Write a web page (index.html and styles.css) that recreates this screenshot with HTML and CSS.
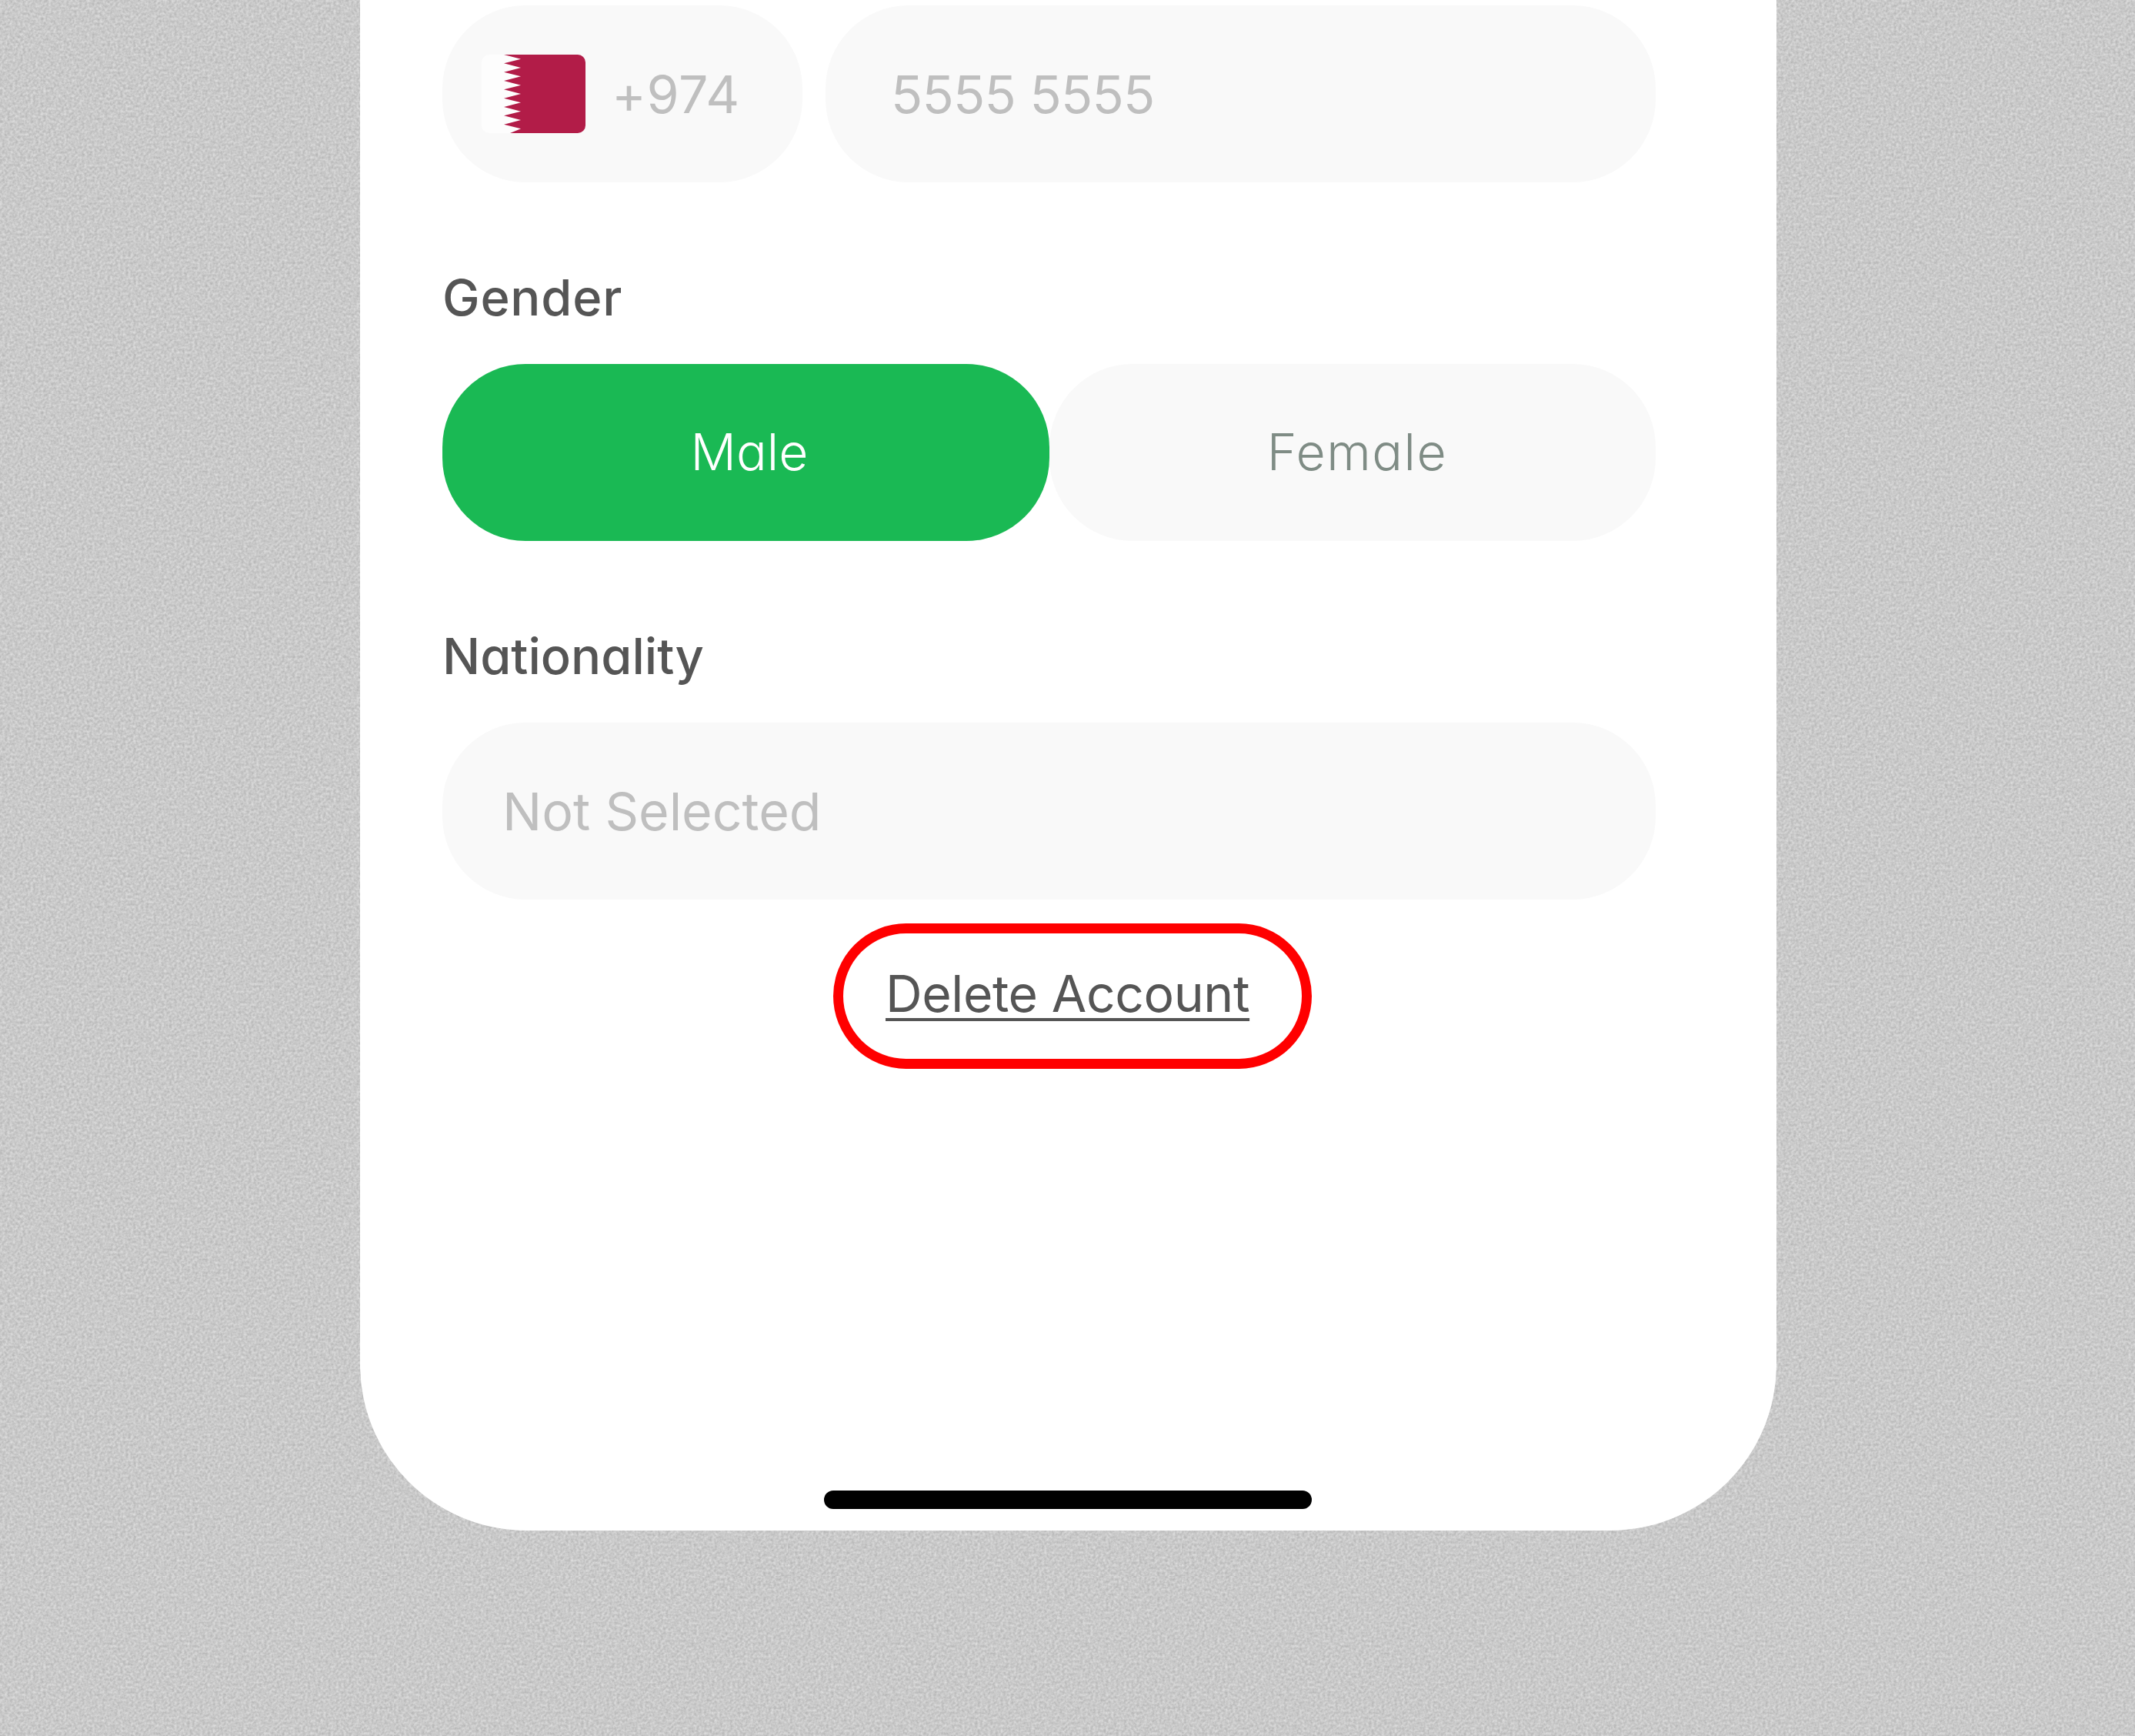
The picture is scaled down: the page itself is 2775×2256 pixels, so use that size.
FILE: index.html
```html
<!DOCTYPE html>
<html lang="en">
<head>
  <meta charset="UTF-8">
  <title>Edit Profile</title>
  <link rel="stylesheet" href="styles.css">
</head>
<body>
  <div class="card">
    <div class="phone-row">
      <div class="field code">
        <svg class="flag" viewBox="0 0 135 102" aria-hidden="true">
          <defs><clipPath id="flagClip"><rect width="135" height="102" rx="10"/></clipPath></defs>
          <g clip-path="url(#flagClip)">
            <rect width="135" height="102" fill="#fdfdfd"/>
            <path fill="#b21c48" d="M29 0L51 5.7L29 11.3L51 17L29 22.7L51 28.3L29 34L51 39.7L29 45.3L51 51L29 56.7L51 62.3L29 68L51 73.7L29 79.3L51 85L29 90.7L51 96.3L37 102H135V0Z"/>
          </g>
        </svg>
        <span class="placeholder code-text">+974</span>
      </div>
      <div class="field number">
        <span class="placeholder number-text">5555 5555</span>
      </div>
    </div>

    <div class="label label-gender">Gender</div>
    <div class="gender-row">
      <div class="field option male">Male</div>
      <div class="field option female">Female</div>
    </div>

    <div class="label">Nationality</div>
    <div class="field nationality">
      <span class="placeholder">Not Selected</span>
    </div>

    <div class="delete-wrap">
      <a class="delete-link" href="#">Delete Account</a>
    </div>

    <div class="home-bar"></div>
  </div>
</body>
</html>
```

FILE: styles.css
```css
* {
  box-sizing: border-box;
}

html, body {
  margin: 0;
  height: 2256px;
  overflow: hidden;
}

body {
  background-color: #c9c9c9;
  background-image: url("data:image/svg+xml,%3Csvg xmlns='http://www.w3.org/2000/svg' width='512' height='512'%3E%3Cfilter id='n' color-interpolation-filters='sRGB'%3E%3CfeTurbulence type='fractalNoise' baseFrequency='0.3' numOctaves='2' stitchTiles='stitch'/%3E%3CfeColorMatrix values='0.22 0 0 0 0.68 0.22 0 0 0 0.68 0.22 0 0 0 0.68 0 0 0 0 1'/%3E%3C/filter%3E%3Crect width='512' height='512' filter='url(%23n)'/%3E%3C/svg%3E");
  font-family: Inter, "Liberation Sans", sans-serif;
  font-feature-settings: "cv11";
}

.card {
  width: 1841px;
  height: 1989px;
  margin-left: 468px;
  padding: 7px 157px 28px 107px;
  display: flex;
  flex-direction: column;
  background-color: #fff;
  border-radius: 0 0 216px 216px;
}

.field {
  height: 230px;
  display: flex;
  align-items: center;
  background-color: #f9f9f9;
  border-radius: 108px;
  font-size: 68px;
  font-weight: 400;
}

.placeholder {
  color: #bfbfbf;
}

.phone-row {
  display: flex;
  gap: 30px;
}

.code {
  width: 468px;
  padding-left: 51px;
}

.flag {
  width: 135px;
  height: 102px;
  margin-right: 34px;
}

.code-text {
  letter-spacing: 0.6px;
}

.number {
  flex: 1;
  padding-left: 85px;
}

.number-text {
  letter-spacing: -0.8px;
}

.label {
  margin-top: 110px;
  margin-bottom: 46px;
  font-size: 65px;
  line-height: 80px;
  font-weight: 500;
  color: #555;
}

.label-gender {
  letter-spacing: 0.8px;
}

.gender-row {
  display: flex;
}

.option {
  justify-content: center;
  padding-bottom: 2px;
  font-size: 66px;
  font-weight: 350;
}

.male {
  width: 789px;
  padding-left: 9px;
  background-color: #1ab954;
  color: #fff;
}

.female {
  flex: 1;
  padding-left: 12px;
  color: #7f8c85;
  letter-spacing: 1.5px;
}

.nationality {
  padding-left: 78px;
}

.delete-wrap {
  width: 622px;
  height: 189px;
  margin-top: 31px;
  margin-left: 508px;
  padding-left: 55px;
  padding-bottom: 8px;
  display: flex;
  align-items: center;
  border: 13px solid #f00;
  border-radius: 95px;
}

.delete-link {
  color: #555;
  font-size: 66px;
  font-weight: 380;
  letter-spacing: -0.4px;
  text-decoration: underline;
  text-decoration-thickness: 4px;
  text-underline-offset: 8px;
}

.home-bar {
  width: 634px;
  height: 24px;
  margin-top: auto;
  margin-left: 496px;
  background-color: #000;
  border-radius: 12px;
}
```
